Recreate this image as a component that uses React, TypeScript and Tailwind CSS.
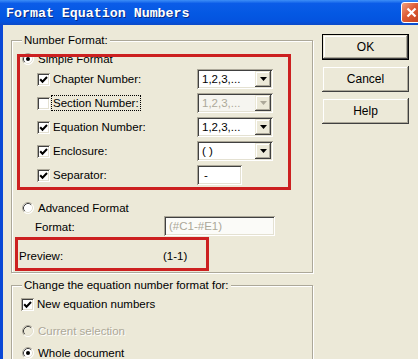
import React from "react";

const sunken =
  "shadow-[inset_1px_1px_0_#aca899,inset_-1px_-1px_0_#ffffff,inset_2px_2px_0_#404040,inset_-2px_-2px_0_#e4e1d2]";
const raised =
  "shadow-[inset_-1px_-1px_0_#404040,inset_1px_1px_0_#ece9d8,inset_-2px_-2px_0_#aca899,inset_2px_2px_0_#ffffff]";

function Radio({ checked, disabled }: { checked?: boolean; disabled?: boolean }) {
  return (
    <svg width="12" height="12" viewBox="0 0 12 12" className="shrink-0">
      <circle cx="6" cy="6" r="5.5" fill={disabled ? "#ece9d8" : "#ffffff"} />
      <path d="M2.11 9.89 A5.5 5.5 0 0 1 9.89 2.11" stroke="#aca899" fill="none" />
      <path d="M9.89 2.11 A5.5 5.5 0 0 1 2.11 9.89" stroke="#ffffff" fill="none" />
      <path d="M2.82 9.18 A4.5 4.5 0 0 1 9.18 2.82" stroke="#404040" fill="none" />
      <path d="M9.18 2.82 A4.5 4.5 0 0 1 2.82 9.18" stroke="#e4e1d2" fill="none" />
      {checked && <circle cx="6" cy="6" r="2" fill="#000000" />}
    </svg>
  );
}

function Check({ checked }: { checked?: boolean }) {
  return (
    <div className={`w-[13px] h-[13px] shrink-0 bg-white ${sunken} flex items-center justify-center`}>
      {checked && (
        <svg width="13" height="13" viewBox="0 0 13 13">
          <polyline points="3.2,6.2 5.5,8.7 10,4" fill="none" stroke="#000" strokeWidth="2" />
        </svg>
      )}
    </div>
  );
}

function Combo({ value, disabled }: { value: string; disabled?: boolean }) {
  return (
    <div className={`flex h-[20px] w-[76px] p-[2px] ${disabled ? "bg-[#f6f5f0]" : "bg-white"} ${sunken}`}>
      <div className={`flex-1 flex items-center pl-[3px] ${disabled ? "text-[#aca899]" : "text-black"}`}>
        {value}
      </div>
      <div className={`w-[16px] h-[16px] bg-[#ece9d8] ${raised} flex items-center justify-center`}>
        <svg width="7" height="4" viewBox="0 0 7 4">
          <polygon points="0,0 7,0 3.5,4" fill={disabled ? "#aca899" : "#000"} />
        </svg>
      </div>
    </div>
  );
}

function Btn({ label, def }: { label: string; def?: boolean }) {
  return (
    <div
      className={`w-[87px] h-[26px] flex items-center justify-center bg-[#ece9d8] text-[12px] ${
        def ? "border border-black" : ""
      } ${raised}`}
    >
      {label}
    </div>
  );
}

function Group({
  title,
  className,
  children,
}: {
  title: string;
  className: string;
  children: React.ReactNode;
}) {
  return (
    <div
      className={`relative shrink-0 border border-[#aca899] shadow-[inset_1px_1px_0_#ffffff,1px_1px_0_#ffffff] ${className}`}
    >
      <span className="absolute left-[10px] top-[-7px] px-[2px] bg-[#ece9d8] leading-[13px] text-[11.5px]">
        {title}
      </span>
      {children}
    </div>
  );
}

export default function App() {
  const rows: { label: string; checked: boolean; value: string; disabled?: boolean; focus?: boolean }[] = [
    { label: "Chapter Number:", checked: true, value: "1,2,3,..." },
    { label: "Section Number:", checked: false, value: "1,2,3,...", disabled: true, focus: true },
    { label: "Equation Number:", checked: true, value: "1,2,3,..." },
    { label: "Enclosure:", checked: true, value: "( )" },
  ];
  return (
    <div className="relative w-[418px] h-[359px] overflow-hidden bg-[#ece9d8] text-[11.5px] leading-[13px] text-black font-['Liberation_Sans',Arial,sans-serif]">
      {/* title bar */}
      <div className="relative h-[25px] flex items-center bg-[linear-gradient(to_bottom,#3d8ef7_0%,#0b5ce8_14%,#0458e3_55%,#0453df_85%,#0c4ac8_100%)]">
        <span className="pl-[6px] pt-[1px] text-white font-bold text-[13.3px] font-['Liberation_Mono',monospace] [text-shadow:1px_1px_0_#0a2a80]">
          Format Equation Numbers
        </span>
        <div className="absolute left-[401px] top-[2px] w-[21px] h-[21px] rounded-[3px] border border-white bg-[linear-gradient(135deg,#f0a080_0%,#dd5a33_45%,#c2401c_100%)] flex items-center justify-center">
          <svg width="11" height="11" viewBox="0 0 11 11">
            <path d="M1.5 1.5 L9.5 9.5 M9.5 1.5 L1.5 9.5" stroke="#fff" strokeWidth="2.2" />
          </svg>
        </div>
      </div>

      {/* body */}
      <div className="flex h-[334px]">
        <div className="w-[3px] shrink-0 bg-[#0a48d6]" />
        <div className="flex pl-[8px]">
          <div className="w-[302px] flex flex-col">
            <Group title="Number Format:" className="mt-[15px] h-[233px] flex flex-col pt-[10px]">
              <div className="h-[16px] flex items-center pl-[10px]">
                <Radio checked />
                <span className="ml-[4px]">Simple Format</span>
              </div>
              {rows.map((r) => (
                <div key={r.label} className="h-[24px] flex items-center pl-[25px]">
                  <Check checked={r.checked} />
                  <div className="w-[144px] ml-[3px]">
                    <span className={r.focus ? "outline outline-1 outline-dotted outline-black outline-offset-[1px]" : ""}>
                      {r.label}
                    </span>
                  </div>
                  <Combo value={r.value} disabled={r.disabled} />
                </div>
              ))}
              <div className="h-[24px] flex items-center pl-[25px]">
                <Check checked />
                <div className="w-[144px] ml-[3px]">Separator:</div>
                <div className={`h-[20px] w-[45px] bg-white ${sunken} flex items-center pl-[7px]`}>-</div>
              </div>
              <div className="mt-[13px] h-[16px] flex items-center pl-[10px]">
                <Radio />
                <span className="ml-[4px]">Advanced Format</span>
              </div>
              <div className="h-[20px] flex items-center pl-[23px]">
                <div className="w-[129px] pt-[3px]">Format:</div>
                <div className={`h-[20px] w-[111px] bg-[#fbfbf8] ${sunken} flex items-center pl-[5px] text-[#aca899]`}>
                  (#C1-#E1)
                </div>
              </div>
              <div className="mt-[12px] h-[16px] flex items-center pl-[7px]">
                <div className="w-[144px]">Preview:</div>
                <span>(1-1)</span>
              </div>
            </Group>

            <Group title="Change the equation number format for:" className="mt-[12px] h-[100px] flex flex-col pt-[10px]">
              <div className="h-[16px] flex items-center pl-[9px]">
                <Check checked />
                <span className="ml-[3px]">New equation numbers</span>
              </div>
              <div className="mt-[11px] h-[16px] flex items-center pl-[10px]">
                <Radio disabled />
                <span className="ml-[4px] text-[#aca899] [text-shadow:1px_1px_0_#ffffff]">Current selection</span>
              </div>
              <div className="mt-[6px] h-[16px] flex items-center pl-[10px]">
                <Radio checked />
                <span className="ml-[4px]">Whole document</span>
              </div>
            </Group>
          </div>

          <div className="ml-[9px] mt-[9px] flex flex-col gap-[6px]">
            <Btn label="OK" def />
            <Btn label="Cancel" />
            <Btn label="Help" />
          </div>
        </div>
      </div>

      {/* red annotation boxes */}
      <div className="absolute left-[17px] top-[54px] w-[274px] h-[136px] border-[3px] border-[#cc2020]" />
      <div className="absolute left-[15px] top-[237px] w-[194px] h-[34px] border-[3px] border-[#cc2020]" />
    </div>
  );
}
